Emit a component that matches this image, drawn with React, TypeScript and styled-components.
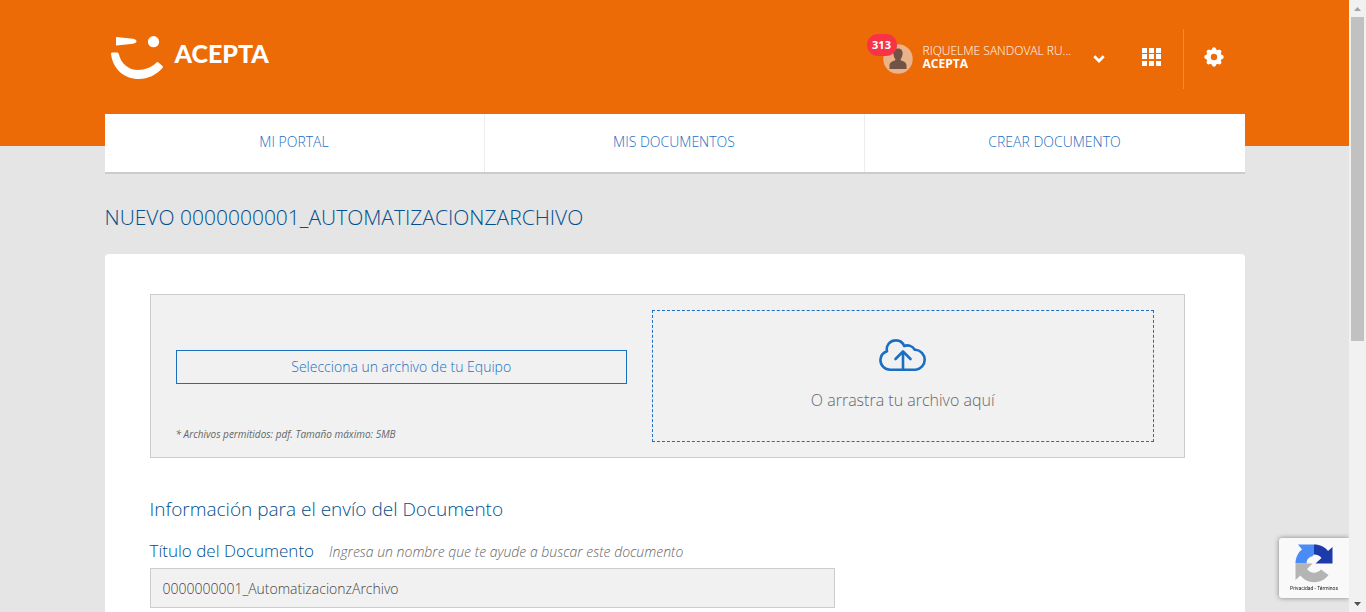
import React from "react";
import styled, { createGlobalStyle } from "styled-components";

const GlobalStyle = createGlobalStyle`
  *, *::before, *::after { box-sizing: border-box; }
  body {
    margin: 0;
    background: #e5e5e5;
    font-family: "Open Sans", sans-serif;
    font-weight: 300;
  }
`;

const Screen = styled.div`
  display: flex;
  height: 100vh;
  overflow: hidden;
`;

const Page = styled.div`
  flex: 1;
  min-width: 0;
  overflow: hidden;
`;

const Container = styled.div`
  width: 100%;
  max-width: 1140px;
  margin: 0 auto;
`;

const Header = styled.header`
  height: 146px;
  background: #ed6b06;
`;

const HeaderRow = styled(Container)`
  display: flex;
  align-items: flex-start;
  justify-content: space-between;
  height: 114px;
  padding: 29px 0 0 6px;
`;

const Brand = styled.a`
  display: flex;
  align-items: center;
  gap: 11px;
  height: 50px;
  padding-top: 6px;
  color: #fff;
  text-decoration: none;
`;

const BrandName = styled.span`
  font-family: Lato, sans-serif;
  font-size: 25px;
  line-height: 36px;
  font-weight: 900;
  padding-bottom: 8px;
`;

const Tools = styled.div`
  display: flex;
  align-items: center;
  height: 60px;
`;

const UserButton = styled.button`
  display: flex;
  align-items: center;
  gap: 10px;
  padding: 0;
  border: 0;
  background: none;
  color: #fff;
  font: inherit;
  text-align: left;
  cursor: pointer;
`;

const AvatarBox = styled.span`
  position: relative;
  display: flex;
`;

const Badge = styled.span`
  position: absolute;
  top: -10px;
  left: -16px;
  width: 30px;
  height: 22px;
  border-radius: 11px;
  background: #fa3246;
  font-size: 11px;
  line-height: 22px;
  font-weight: 700;
  text-align: center;
`;

const UserText = styled.span`
  display: flex;
  flex-direction: column;
  width: 150px;
  font-size: 12px;
  line-height: 13px;
  padding-bottom: 4px;
  white-space: nowrap;
`;

const Company = styled.strong`
  font-weight: 700;
`;

const ChevronBox = styled.span`
  display: flex;
  padding-left: 10px;
`;

const IconButton = styled.button<{ $divided?: boolean }>`
  display: flex;
  align-items: center;
  justify-content: center;
  height: 60px;
  width: 62px;
  padding: 0 0 5px;
  border: 0;
  border-left: ${(p) => (p.$divided ? "1px solid #f28a3c" : "0")};
  background: none;
  color: #fff;
  cursor: pointer;
`;

const AppsButton = styled(IconButton)`
  margin-left: 16px;
`;

const Nav = styled.nav`
  display: grid;
  grid-template-columns: repeat(3, 1fr);
  max-width: 1140px;
  margin: -32px auto 0;
  background: #fff;
  border-bottom: 2px solid #ccc;
`;

const NavLink = styled.a`
  height: 58px;
  padding-top: 18px;
  color: #1b6ec2;
  font-size: 14px;
  line-height: 20px;
  text-align: center;
  text-decoration: none;
  border-right: 1px solid #ededed;
  &:last-child { border-right: 0; }
`;

const PageTitle = styled.h1`
  margin: 30px 0 23px;
  color: #004f8f;
  font-size: 21px;
  line-height: 27px;
  font-weight: 300;
`;

const Card = styled.section`
  padding: 40px 60px 40px 45px;
  border-radius: 4px 4px 0 0;
  background: #fff;
`;

const UploadBox = styled.div`
  display: grid;
  grid-template-columns: 9fr 10fr;
  gap: 25px;
  padding: 15px 30px 15px 25px;
  border: 1px solid #ccc;
  background: #f1f1f1;
`;

const UploadSide = styled.div`
  display: flex;
  flex-direction: column;
  justify-content: space-between;
  padding-top: 40px;
`;

const SelectButton = styled.button`
  height: 34px;
  padding: 0 0 2px;
  border: 1px solid #1b6ec2;
  background: none;
  color: #1b6ec2;
  font: inherit;
  font-size: 14px;
  cursor: pointer;
`;

const Note = styled.small`
  color: #666;
  font-size: 10px;
  line-height: 16px;
  font-weight: 400;
  font-style: italic;
`;

const DropZone = styled.div`
  display: flex;
  flex-direction: column;
  align-items: center;
  gap: 16px;
  height: 132px;
  padding-top: 28px;
  border: 1px dashed #1b6ec2;
  color: #666;
  font-size: 16px;
  line-height: 24px;
`;

const SectionTitle = styled.h2`
  margin: 38px 0 16px;
  color: #004f8f;
  font-size: 19px;
  line-height: 26px;
  font-weight: 300;
`;

const FieldHead = styled.div`
  display: flex;
  align-items: baseline;
  gap: 15px;
  line-height: 26px;
  padding-bottom: 3px;
`;

const Label = styled.label`
  color: #004f8f;
  font-size: 17px;
`;

const Hint = styled.em`
  color: #666;
  font-size: 14px;
`;

const TextInput = styled.input`
  display: block;
  width: 100%;
  max-width: 685px;
  height: 40px;
  padding: 0 12px;
  border: 1px solid #ccc;
  border-radius: 0;
  background: #f1f1f1;
  color: #444;
  font: inherit;
  font-size: 14px;
`;

const Privacy = styled.aside`
  position: fixed;
  right: 17px;
  bottom: 14px;
  display: flex;
  flex-direction: column;
  align-items: center;
  width: 70px;
  height: 60px;
  padding-top: 6px;
  border-radius: 3px 0 0 3px;
  background: #f9f9f9;
  box-shadow: 0 0 5px #808080;
  clip-path: inset(-8px 0 -8px -8px);
`;

const PrivacyText = styled.div`
  color: #222;
  font-family: Roboto, sans-serif;
  font-size: 5px;
  line-height: 10px;
  font-weight: 400;
  white-space: nowrap;
`;

const PrivacyLink = styled.a`
  color: inherit;
  text-decoration: none;
`;

const Track = styled.div`
  display: flex;
  flex-direction: column;
  align-items: center;
  width: 17px;
  background: #f1f1f1;
`;

const ArrowBox = styled.span`
  display: flex;
  align-items: center;
  justify-content: center;
  height: 17px;
`;

const ThumbArea = styled.div`
  flex: 1;
  width: 13px;
`;

const Thumb = styled.div`
  height: 56%;
  background: #c1c1c1;
`;

const Smile = () => (
  <svg width="53" height="43" viewBox="0 0 53 43" fill="#fff" aria-hidden="true">
    <path d="M5.500 1 L22 2.700 Q25.500 3.500 25.500 5.300 Q25.500 7.200 22 7.700 L5.500 9.500 Q5 9.500 5 9 V1.500 Q5 1 5.500 1 Z" />
    <circle cx="42.500" cy="5.700" r="5.600" />
    <path d="M1 16.500 H6 Q7.500 16.500 7.800 18 C10 28 18 34 27 34 C34 34 41 31 45 27 Q46 25.500 47.500 26.500 L51.500 30 Q52.500 31 51.500 32 C45 39 37 43 28 43 C13 43 2 33 0 18 Q0 16.500 1 16.500 Z" />
  </svg>
);

const Avatar = () => (
  <svg width="30" height="30" viewBox="0 0 30 30" aria-hidden="true">
    <circle cx="15" cy="15" r="14.700" fill="#ebb38b" />
    <path
      d="M15 4.500 C18.500 4.500 20 7 19.500 10.500 C19.200 12.500 18.500 14 17.700 15 V16.200 C20.500 17.200 23.500 18.200 23.500 21.500 V25 H6.500 V21.500 C6.500 18.200 9.500 17.200 12.300 16.200 V15 C11.500 14 10.800 12.500 10.500 10.500 C10 7 11.500 4.500 15 4.500 Z"
      fill="#705344"
    />
  </svg>
);

const Chevron = () => (
  <svg width="12" height="8" viewBox="0 0 12 8" aria-hidden="true">
    <path d="M1.300 1.300 L6 6 L10.700 1.300" fill="none" stroke="#fff" strokeWidth="2.800" />
  </svg>
);

const AppsIcon = () => (
  <svg width="19" height="18" viewBox="0 0 19 18" fill="currentColor" aria-hidden="true">
    {[0, 6, 13].map((y) =>
      [0, 7, 14].map((x) => <rect key={`${x}-${y}`} x={x} y={y} width="5" height="5" />)
    )}
  </svg>
);

const Gear = () => (
  <svg width="20" height="20" viewBox="-10 -10 20 20" fill="currentColor" aria-hidden="true">
    <circle r="5.500" fill="none" stroke="currentColor" strokeWidth="4.600" />
    {[0, 45, 90, 135, 180, 225, 270, 315].map((a) => (
      <path key={a} transform={`rotate(${a})`} d="M-2.400 -6.500 L-1.700 -9 Q0 -10.300 1.700 -9 L2.400 -6.500 Z" />
    ))}
  </svg>
);

const CloudUpload = () => (
  <svg
    width="48"
    height="33"
    viewBox="0 0 48 33"
    fill="none"
    stroke="#1b6ec2"
    strokeWidth="2.600"
    strokeLinecap="round"
    strokeLinejoin="round"
    aria-hidden="true"
  >
    <path d="M11.300 30.700 H36.700 A10 10 0 0 0 36.700 10.800 L35.800 10.800 A8.500 8.500 0 0 0 25.200 7 A9 9 0 0 0 16.500 1.400 A8.800 8.800 0 0 0 8 12.200 A9.800 9.800 0 0 0 1.400 20.900 A9.800 9.800 0 0 0 11.300 30.700 Z" />
    <path d="M24 30.500 V12.700 M16.500 20 L24 12.500 L31.500 20" />
  </svg>
);

const Recycle = () => (
  <svg width="38" height="39" viewBox="0 0 38 39" aria-hidden="true">
    <path d="M19 0.500 C25 0.500 30 3 33 7 L37.500 3 V19.500 H20.500 L26.500 14 C25 12 22.500 10.500 19 10.500 Z" fill="#1c3aa9" />
    <path d="M19 0.500 V10.500 C17 12 18 13 16 12.500 C13 14 11.500 16 11.500 19.500 H0.500 C0.500 13.500 3 8.500 7 5.500 L3 0.500 Z" fill="#4a8cf5" />
    <path d="M0.500 19.500 H17.500 L12 25 C15 29.500 22 30 26 25.500 L33.500 31 C26 41 11.500 40 5.500 31.500 L0.500 36 Z" fill="#b4b4b4" />
  </svg>
);

const Arrow = ({ down }: { down?: boolean }) => (
  <svg width="7" height="4" viewBox="0 0 7 4" aria-hidden="true">
    <path d={down ? "M0 0 H7 L3.500 4 Z" : "M0 4 H7 L3.500 0 Z"} fill={down ? "#505050" : "#a3a3a3"} />
  </svg>
);

const sections = ["MI PORTAL", "MIS DOCUMENTOS", "CREAR DOCUMENTO"];

export default function App() {
  return (
    <Screen>
      <GlobalStyle />
      <Page>
        <Header>
          <HeaderRow>
            <Brand href="#">
              <Smile />
              <BrandName>ACEPTA</BrandName>
            </Brand>
            <Tools>
              <UserButton type="button">
                <AvatarBox>
                  <Avatar />
                  <Badge>313</Badge>
                </AvatarBox>
                <UserText>
                  <span>RIQUELME SANDOVAL RU...</span>
                  <Company>ACEPTA</Company>
                </UserText>
                <ChevronBox>
                  <Chevron />
                </ChevronBox>
              </UserButton>
              <AppsButton type="button" aria-label="Aplicaciones">
                <AppsIcon />
              </AppsButton>
              <IconButton type="button" aria-label="Configuración" $divided>
                <Gear />
              </IconButton>
            </Tools>
          </HeaderRow>
        </Header>
        <Nav>
          {sections.map((name) => (
            <NavLink key={name} href="#">
              {name}
            </NavLink>
          ))}
        </Nav>
        <Container as="main">
          <PageTitle>NUEVO 0000000001_AUTOMATIZACIONZARCHIVO</PageTitle>
          <Card>
            <UploadBox>
              <UploadSide>
                <SelectButton type="button">Selecciona un archivo de tu Equipo</SelectButton>
                <Note>* Archivos permitidos: pdf. Tamaño máximo: 5MB</Note>
              </UploadSide>
              <DropZone>
                <CloudUpload />
                <span>O arrastra tu archivo aquí</span>
              </DropZone>
            </UploadBox>
            <SectionTitle>Información para el envío del Documento</SectionTitle>
            <FieldHead>
              <Label htmlFor="titulo">Título del Documento</Label>
              <Hint>Ingresa un nombre que te ayude a buscar este documento</Hint>
            </FieldHead>
            <TextInput id="titulo" type="text" defaultValue="0000000001_AutomatizacionzArchivo" />
          </Card>
        </Container>
      </Page>
      <Track aria-hidden="true">
        <ArrowBox>
          <Arrow />
        </ArrowBox>
        <ThumbArea>
          <Thumb />
        </ThumbArea>
        <ArrowBox>
          <Arrow down />
        </ArrowBox>
      </Track>
      <Privacy>
        <Recycle />
        <PrivacyText>
          <PrivacyLink href="#">Privacidad</PrivacyLink> - <PrivacyLink href="#">Términos</PrivacyLink>
        </PrivacyText>
      </Privacy>
    </Screen>
  );
}
